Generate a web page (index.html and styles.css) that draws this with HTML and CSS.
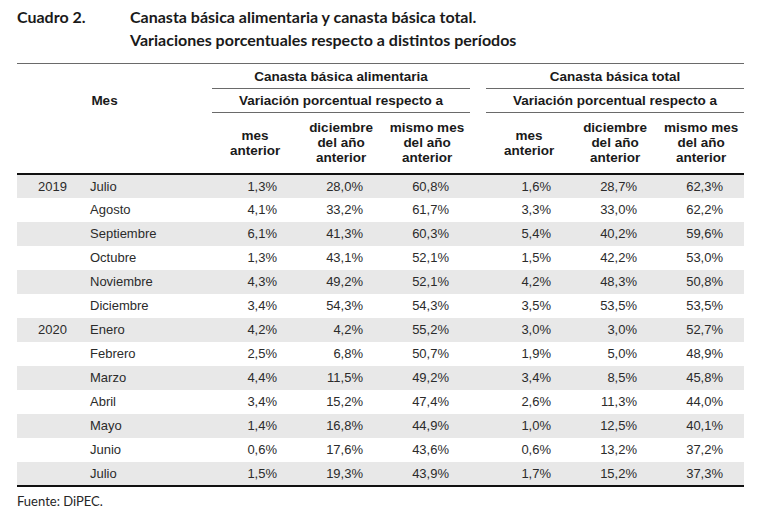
FILE: index.html
```html
<!DOCTYPE html>
<html lang="es">
<head>
    <meta charset="UTF-8">
    <meta name="viewport" content="width=device-width, initial-scale=1.0">
    <title>Cuadro 2</title>
    <link rel="stylesheet" href="styles.css">
</head>
<body>
    <div class="sheet">
        <div class="caption">
            <div class="caption-num">Cuadro 2.</div>
            <div class="caption-text">
                <div>Canasta básica alimentaria y canasta básica total.</div>
                <div>Variaciones porcentuales respecto a distintos períodos</div>
            </div>
        </div>

        <table class="cba-table">
            <colgroup>
                <col class="c-year">
                <col class="c-month">
                <col class="c-num">
                <col class="c-num">
                <col class="c-num">
                <col class="c-gap">
                <col class="c-num">
                <col class="c-num">
                <col class="c-num">
            </colgroup>
            <thead>
                <tr class="h1">
                    <th class="mes" colspan="2" rowspan="3">Mes</th>
                    <th class="group" colspan="3">Canasta básica alimentaria</th>
                    <th class="gap" rowspan="3"></th>
                    <th class="group" colspan="3">Canasta básica total</th>
                </tr>
                <tr class="h2">
                    <th class="group" colspan="3">Variación porcentual respecto a</th>
                    <th class="group" colspan="3">Variación porcentual respecto a</th>
                </tr>
                <tr class="h3">
                    <th>mes<br>anterior</th>
                    <th>diciembre<br>del año<br>anterior</th>
                    <th>mismo mes<br>del año<br>anterior</th>
                    <th>mes<br>anterior</th>
                    <th>diciembre<br>del año<br>anterior</th>
                    <th>mismo mes<br>del año<br>anterior</th>
                </tr>
            </thead>
            <tbody>
                <tr><td class="year">2019</td><td class="month">Julio</td><td>1,3%</td><td>28,0%</td><td>60,8%</td><td></td><td>1,6%</td><td>28,7%</td><td>62,3%</td></tr>
                <tr><td class="year"></td><td class="month">Agosto</td><td>4,1%</td><td>33,2%</td><td>61,7%</td><td></td><td>3,3%</td><td>33,0%</td><td>62,2%</td></tr>
                <tr><td class="year"></td><td class="month">Septiembre</td><td>6,1%</td><td>41,3%</td><td>60,3%</td><td></td><td>5,4%</td><td>40,2%</td><td>59,6%</td></tr>
                <tr><td class="year"></td><td class="month">Octubre</td><td>1,3%</td><td>43,1%</td><td>52,1%</td><td></td><td>1,5%</td><td>42,2%</td><td>53,0%</td></tr>
                <tr><td class="year"></td><td class="month">Noviembre</td><td>4,3%</td><td>49,2%</td><td>52,1%</td><td></td><td>4,2%</td><td>48,3%</td><td>50,8%</td></tr>
                <tr><td class="year"></td><td class="month">Diciembre</td><td>3,4%</td><td>54,3%</td><td>54,3%</td><td></td><td>3,5%</td><td>53,5%</td><td>53,5%</td></tr>
                <tr><td class="year">2020</td><td class="month">Enero</td><td>4,2%</td><td>4,2%</td><td>55,2%</td><td></td><td>3,0%</td><td>3,0%</td><td>52,7%</td></tr>
                <tr><td class="year"></td><td class="month">Febrero</td><td>2,5%</td><td>6,8%</td><td>50,7%</td><td></td><td>1,9%</td><td>5,0%</td><td>48,9%</td></tr>
                <tr><td class="year"></td><td class="month">Marzo</td><td>4,4%</td><td>11,5%</td><td>49,2%</td><td></td><td>3,4%</td><td>8,5%</td><td>45,8%</td></tr>
                <tr><td class="year"></td><td class="month">Abril</td><td>3,4%</td><td>15,2%</td><td>47,4%</td><td></td><td>2,6%</td><td>11,3%</td><td>44,0%</td></tr>
                <tr><td class="year"></td><td class="month">Mayo</td><td>1,4%</td><td>16,8%</td><td>44,9%</td><td></td><td>1,0%</td><td>12,5%</td><td>40,1%</td></tr>
                <tr><td class="year"></td><td class="month">Junio</td><td>0,6%</td><td>17,6%</td><td>43,6%</td><td></td><td>0,6%</td><td>13,2%</td><td>37,2%</td></tr>
                <tr><td class="year"></td><td class="month">Julio</td><td>1,5%</td><td>19,3%</td><td>43,9%</td><td></td><td>1,7%</td><td>15,2%</td><td>37,3%</td></tr>
            </tbody>
        </table>

        <div class="source">Fuente: DiPEC.</div>
    </div>
</body>
</html>
```

FILE: styles.css
```css
body {
    margin: 0;
    background-color: #fff;
    color: #2b2b2b;
}

.sheet {
    padding: 5px 0 0 17px;
}

.caption {
    display: flex;
    font-family: Lato, "Open Sans", sans-serif;
    font-weight: bold;
    font-size: 16px;
    line-height: 23px;
    color: #1a1a1a;
}

.caption-num {
    width: 113px;
}

.cba-table {
    margin-top: 12px;
    width: 726px;
    table-layout: fixed;
    border-collapse: collapse;
    font-family: "Liberation Sans", Arial, sans-serif;
    font-size: 13px;
}

.c-year { width: 63px; }
.c-month { width: 132px; }
.c-num { width: 86px; }
.c-gap { width: 16px; }

.cba-table thead {
    border-top: 1px solid #6a6a6a;
}

.cba-table th {
    padding: 0;
    font-size: 13.5px;
    font-weight: bold;
    color: #1a1a1a;
    text-align: center;
}

.cba-table th.mes {
    vertical-align: top;
    padding: 29px 20px 0 0;
}

.cba-table th.group {
    border-bottom: 1px solid #6a6a6a;
}

.cba-table tr.h1 {
    height: 25px;
}

.cba-table tr.h2 {
    height: 24px;
}

.cba-table tr.h3 {
    height: 61px;
}

.cba-table tr.h3 th {
    line-height: 15px;
    vertical-align: middle;
}

.cba-table tbody tr {
    height: 24px;
}

.cba-table tbody tr:nth-child(odd) {
    background-color: #e8e8e8;
}

.cba-table tbody tr:first-child td {
    border-top: 2px solid #111;
}

.cba-table tbody tr:last-child td {
    border-bottom: 2px solid #111;
}

.cba-table td {
    padding: 0 21px 0 0;
    text-align: right;
    white-space: nowrap;
}

.cba-table td.year {
    text-align: left;
    padding: 0 0 0 21px;
}

.cba-table td.month {
    text-align: left;
    padding: 0 0 0 10px;
}

.source {
    margin-top: 6px;
    font-family: Lato, "Open Sans", sans-serif;
    font-size: 13px;
    color: #262626;
}
```
